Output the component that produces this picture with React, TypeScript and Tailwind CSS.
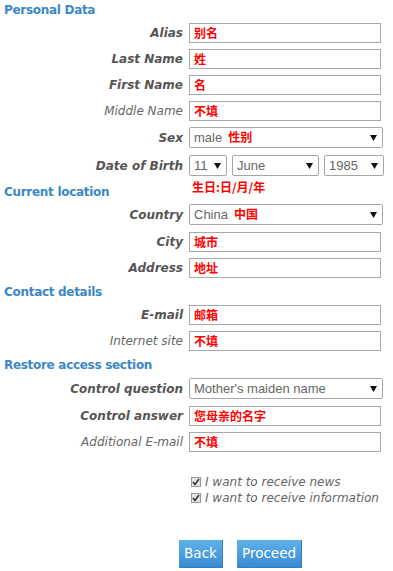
import React from 'react';

const cjk = "font-['Noto_Sans_CJK_SC',sans-serif] font-bold text-[12px] text-[#ff0000]";

function Heading({ children, className = '' }: { children: React.ReactNode; className?: string }) {
  return (
    <div className={`pl-[4px] text-[12px] leading-[16px] font-bold tracking-[-0.3px] text-[#3b87c6] ${className}`}>
      {children}
    </div>
  );
}

function Row({ label, strong = true, className = '', children }: { label: string; strong?: boolean; className?: string; children: React.ReactNode }) {
  return (
    <div className={`flex items-center ${className}`}>
      <div className={`w-[183px] text-right text-[12px] italic leading-[16px] ${strong ? 'font-bold text-[#555]' : 'text-[#666]'}`}>
        {label}
      </div>
      <div className="ml-[6px]">{children}</div>
    </div>
  );
}

function TextBox({ value }: { value: string }) {
  return (
    <div className="flex h-[20px] w-[192px] items-center border border-[#a9a9a9] bg-white pl-[4px]">
      <span className={`${cjk} leading-[16px]`}>{value}</span>
    </div>
  );
}

function Arrow() {
  return (
    <svg width="7" height="6" viewBox="0 0 7 6" className="shrink-0">
      <path d="M0 0 H7 L3.5 6 Z" fill="#111" />
    </svg>
  );
}

function SelectBox({ width, text, extra }: { width: string; text: string; extra?: string }) {
  return (
    <div className={`flex h-[21px] ${width} items-center justify-between rounded-[2px] border border-[#a6a6a6] bg-white pl-[4px] pr-[5px]`}>
      <span className="font-['Liberation_Sans',sans-serif] text-[13px] leading-[16px] text-[#666]">
        {text}
        {extra && <span className={`${cjk} ml-[6px]`}>{extra}</span>}
      </span>
      <Arrow />
    </div>
  );
}

function CheckLine({ text }: { text: string }) {
  return (
    <div className="flex h-[16px] items-center">
      <span className="flex h-[10px] w-[10px] items-center justify-center border border-[#9a9a9a] bg-[#e4e4e4]">
        <svg width="8" height="8" viewBox="0 0 8 8">
          <path d="M1 4 L3 6.5 L7 1" stroke="#333" strokeWidth="1.6" fill="none" />
        </svg>
      </span>
      <span className="ml-[4px] text-[12px] italic leading-[16px] text-[#666]">{text}</span>
    </div>
  );
}

export default function App() {
  return (
    <div className="h-[571px] w-[393px] overflow-hidden bg-white font-['DejaVu_Sans',sans-serif]">
      <Heading className="pt-[2px]">Personal Data</Heading>
      <Row label="Alias" className="mt-[5px]"><TextBox value="别名" /></Row>
      <Row label="Last Name" className="mt-[6px]"><TextBox value="姓" /></Row>
      <Row label="First Name" className="mt-[6px]"><TextBox value="名" /></Row>
      <Row label="Middle Name" strong={false} className="mt-[6px]"><TextBox value="不填" /></Row>
      <Row label="Sex" className="mt-[6px]"><SelectBox width="w-[194px]" text="male" extra="性别" /></Row>
      <Row label="Date of Birth" className="mt-[7px]">
        <div className="flex gap-[5px]">
          <SelectBox width="w-[38px]" text="11" />
          <SelectBox width="w-[87px]" text="June" />
          <SelectBox width="w-[60px]" text="1985" />
        </div>
      </Row>
      <div className="mt-[3px] flex items-start">
        <div className="w-[189px] pt-[5px]">
          <Heading>Current location</Heading>
        </div>
        <div className={`${cjk} pl-[3px] leading-[16px]`}>生日:日/月/年</div>
      </div>
      <Row label="Country" className="mt-[4px]"><SelectBox width="w-[194px]" text="China" extra="中国" /></Row>
      <Row label="City" className="mt-[7px]"><TextBox value="城市" /></Row>
      <Row label="Address" className="mt-[6px]"><TextBox value="地址" /></Row>
      <Heading className="mt-[6px]">Contact details</Heading>
      <Row label="E-mail" className="mt-[5px]"><TextBox value="邮箱" /></Row>
      <Row label="Internet site" strong={false} className="mt-[6px]"><TextBox value="不填" /></Row>
      <Heading className="mt-[6px]">Restore access section</Heading>
      <Row label="Control question" className="mt-[5px]"><SelectBox width="w-[194px]" text="Mother's maiden name" /></Row>
      <Row label="Control answer" className="mt-[7px]"><TextBox value="您母亲的名字" /></Row>
      <Row label="Additional E-mail" strong={false} className="mt-[6px]"><TextBox value="不填" /></Row>

      <div className="ml-[191px] mt-[22px]">
        <CheckLine text="I want to receive news" />
        <CheckLine text="I want to receive information" />
      </div>

      <div className="ml-[179px] mt-[34px] flex gap-[14px]">
        <button className="h-[28px] w-[44px] border-b border-r border-[#2f7fc2] bg-linear-to-b from-[#5fb1ea] to-[#3b8bd3] text-[13.5px] text-white">
          Back
        </button>
        <button className="h-[28px] w-[65px] border-b border-r border-[#2f7fc2] bg-linear-to-b from-[#5fb1ea] to-[#3b8bd3] text-[13.5px] text-white">
          Proceed
        </button>
      </div>
    </div>
  );
}
